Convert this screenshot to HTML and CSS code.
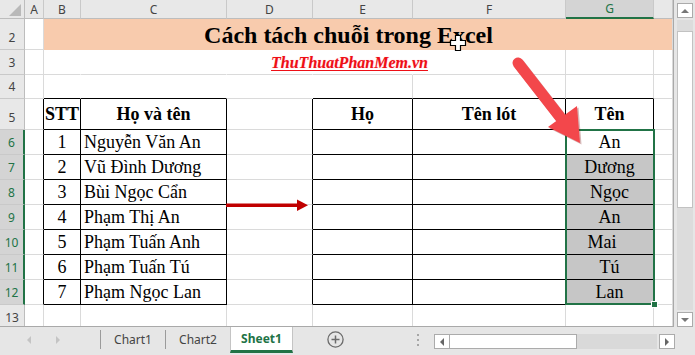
FILE: index.html
```html
<!DOCTYPE html>
<html lang="vi">
<head>
    <meta charset="UTF-8">
    <title>Cách tách chuỗi trong Excel</title>
    <link rel="stylesheet" href="styles.css">
</head>
<body>
<div class="excel">
    <div class="main">
        <div class="sheet">
            <div class="grid tracks">
                <!-- header row -->
                <div class="corner"><i class="tri"></i></div>
                <div class="ch">A</div>
                <div class="ch">B</div>
                <div class="ch">C</div>
                <div class="ch">D</div>
                <div class="ch">E</div>
                <div class="ch">F</div>
                <div class="ch on">G</div>
                <div class="ch"></div>

                <!-- row 2 -->
                <div class="rh">2</div>
                <div class="c"></div>
                <div class="c title">Cách tách chuỗi trong Excel</div>
                <div class="c peach"></div>

                <!-- row 3 -->
                <div class="rh">3</div>
                <div class="c"></div>
                <div class="c nr"></div>
                <div class="c nr"></div>
                <div class="c nr"></div>
                <div class="c nr"></div>
                <div class="c"></div>
                <div class="c"></div>
                <div class="c"></div>

                <!-- row 4 -->
                <div class="rh">4</div>
                <div class="c"></div>
                <div class="c nr kb"></div>
                <div class="c nr kb"></div>
                <div class="c nr"></div>
                <div class="c kb"></div>
                <div class="c kb"></div>
                <div class="c kb"></div>
                <div class="c"></div>

                <!-- row 5 -->
                <div class="rh">5</div>
                <div class="c kr"></div>
                <div class="t hd ctr">STT</div>
                <div class="t hd ctr">Họ và tên</div>
                <div class="c kr"></div>
                <div class="t hd ctr">Họ</div>
                <div class="t hd ctr">Tên lót</div>
                <div class="t hd ctr">Tên</div>
                <div class="c"></div>

                <!-- rows 6 - 12 -->
                <div class="rh on">6</div>
                <div class="c kr"></div>
                <div class="t ctr">1</div>
                <div class="t">Nguyễn Văn An</div>
                <div class="c kr"></div>
                <div class="t"></div>
                <div class="t"></div>
                <div class="t ctr">An</div>
                <div class="c"></div>

                <div class="rh on">7</div>
                <div class="c kr"></div>
                <div class="t ctr">2</div>
                <div class="t">Vũ Đình Dương</div>
                <div class="c kr"></div>
                <div class="t"></div>
                <div class="t"></div>
                <div class="t ctr grey">Dương</div>
                <div class="c"></div>

                <div class="rh on">8</div>
                <div class="c kr"></div>
                <div class="t ctr">3</div>
                <div class="t">Bùi Ngọc Cẩn</div>
                <div class="c kr"></div>
                <div class="t"></div>
                <div class="t"></div>
                <div class="t ctr grey">Ngọc</div>
                <div class="c"></div>

                <div class="rh on">9</div>
                <div class="c kr"></div>
                <div class="t ctr">4</div>
                <div class="t">Phạm Thị An</div>
                <div class="c kr"></div>
                <div class="t"></div>
                <div class="t"></div>
                <div class="t ctr grey">An</div>
                <div class="c"></div>

                <div class="rh on">10</div>
                <div class="c kr"></div>
                <div class="t ctr">5</div>
                <div class="t">Phạm Tuấn Anh</div>
                <div class="c kr"></div>
                <div class="t"></div>
                <div class="t"></div>
                <div class="t ctr grey lean">Mai</div>
                <div class="c"></div>

                <div class="rh on">11</div>
                <div class="c kr"></div>
                <div class="t ctr">6</div>
                <div class="t">Phạm Tuấn Tú</div>
                <div class="c kr"></div>
                <div class="t"></div>
                <div class="t"></div>
                <div class="t ctr grey">Tú</div>
                <div class="c"></div>

                <div class="rh on">12</div>
                <div class="c kr"></div>
                <div class="t ctr">7</div>
                <div class="t">Phạm Ngọc Lan</div>
                <div class="c kr"></div>
                <div class="t"></div>
                <div class="t"></div>
                <div class="t ctr grey">Lan</div>
                <div class="c"></div>

                <!-- row 13 -->
                <div class="rh">13</div>
                <div class="c"></div>
                <div class="c"></div>
                <div class="c"></div>
                <div class="c"></div>
                <div class="c"></div>
                <div class="c"></div>
                <div class="c"></div>
                <div class="c"></div>
            </div>

            <!-- floating things laid on the same tracks -->
            <div class="layer tracks">
                <div class="brand">ThuThuatPhanMem.vn</div>
                <div class="selbox"><i class="handle"></i></div>
            </div>

            <svg class="ink" width="673" height="327" viewBox="0 0 673 327">
                <g transform="translate(1.5 1.5)" opacity=".3">
                    <line x1="518" y1="63" x2="560" y2="117" stroke="#7a1414" stroke-width="11" stroke-linecap="round"/>
                    <polygon points="548,127 577,106 580,143" fill="#7a1414"/>
                </g>
                <line x1="518" y1="63" x2="560" y2="117" stroke="#f3474b" stroke-width="11" stroke-linecap="round"/>
                <polygon points="548,127 577,106 580,143" fill="#f3474b"/>

                <line x1="226" y1="205.3" x2="299" y2="205.3" stroke="#c00000" stroke-width="3.5"/>
                <polygon points="297,199.5 308,205.3 297,211" fill="#c00000"/>

                <path d="M455.5 35.5h5v5h5v5h-5v5h-5v-5h-5v-5h5z" fill="#fff" stroke="#000" stroke-width="1.2"/>
            </svg>
        </div>

        <div class="vscroll">
            <div class="sbtn"><i class="up"></i></div>
            <div class="vtrack"><div class="vthumb"></div></div>
            <div class="sbtn"><i class="down"></i></div>
        </div>
    </div>

    <div class="tabs">
        <div class="nav"><i class="left"></i><i class="right"></i></div>
        <span class="sep"></span>
        <div class="tab">Chart1</div>
        <span class="sep"></span>
        <div class="tab">Chart2</div>
        <div class="tab on">Sheet1</div>
        <div class="add">
            <svg width="17" height="17" viewBox="0 0 17 17">
                <circle cx="8.5" cy="8.5" r="7.6" fill="none" stroke="#6b6b6b" stroke-width="1.3"/>
                <path d="M8.5 4.5v8M4.5 8.5h8" stroke="#6b6b6b" stroke-width="1.5"/>
            </svg>
        </div>
        <div class="dots"><i></i><i></i><i></i></div>
        <div class="hscroll">
            <div class="sbtn"><i class="left dark"></i></div>
            <div class="htrack"><div class="hthumb"></div></div>
            <div class="sbtn"><i class="right dark"></i></div>
        </div>
    </div>
</div>
</body>
</html>
```

FILE: styles.css
```css
* { box-sizing: border-box; }

body {
    margin: 0;
    font-family: "Noto Sans", "Liberation Sans", sans-serif;
}

.excel {
    width: 695px;
    height: 355px;
    display: flex;
    flex-direction: column;
    background: #e6e6e6;
    overflow: hidden;
}

.main {
    display: flex;
    height: 327px;
}

.sheet {
    position: relative;
    width: 673px;
    height: 327px;
    background: #fff;
    border-bottom: 1px solid #a9a9a9;
    overflow: hidden;
}

.tracks {
    display: grid;
    grid-template-columns: 25px 19px 37px 146px 86px 100px 153px 88px 19px;
    grid-template-rows: 19px 31px 25px 24px 31px repeat(7, 25px) 25px;
}

/* headers */
.corner {
    background: #e8e8e8;
    border-right: 1px solid #bdbdbd;
    border-bottom: 1px solid #bdbdbd;
    display: flex;
    align-items: flex-end;
    justify-content: flex-end;
    padding: 0 3px 2px 0;
}
.tri {
    width: 0;
    height: 0;
    border-left: 12px solid transparent;
    border-bottom: 12px solid #b9b9b9;
}
.ch, .rh {
    background: #e8e8e8;
    color: #444;
    font-size: 12px;
    line-height: 14px;
    display: flex;
    justify-content: center;
}
.ch {
    align-items: center;
    padding-top: 1px;
    border-right: 1px solid #c9c9c9;
    border-bottom: 1px solid #bdbdbd;
}
.ch.on {
    background: #d4d4d4;
    color: #217346;
    border-bottom: 2px solid #217346;
}
.rh {
    align-items: flex-end;
    padding-bottom: 4px;
    border-right: 1px solid #bdbdbd;
    border-bottom: 1px solid #c9c9c9;
}
.rh.on {
    background: #d4d4d4;
    color: #217346;
    border-right: 2px solid #217346;
}

/* cells */
.c {
    border-right: 1px solid #dadada;
    border-bottom: 1px solid #dadada;
}
.c.nr { border-right-color: #fff; }
.c.kb { border-bottom-color: #000; }
.c.kr { border-right-color: #000; }

.title {
    grid-column: span 6;
    background: #f8cbad;
    border-color: #f8cbad;
    display: flex;
    align-items: center;
    justify-content: center;
    font-family: "Liberation Serif", "Times New Roman", serif;
    font-weight: bold;
    font-size: 24px;
    color: #000;
    padding-top: 2px;
}
.peach {
    background: #f8cbad;
    border-bottom-color: #f8cbad;
}

.t {
    border-right: 1px solid #000;
    border-bottom: 1px solid #000;
    display: flex;
    align-items: center;
    padding: 0 3px;
    font-family: "Liberation Serif", "Times New Roman", serif;
    font-size: 18px;
    line-height: 20px;
    color: #000;
    white-space: nowrap;
    overflow: hidden;
}
.t.ctr { justify-content: center; }
.t.hd { font-weight: bold; padding: 0; }
.t.grey { background: #c6c6c6; }
.t.lean { padding-right: 18px; }

/* overlay layer */
.layer {
    position: absolute;
    inset: 0;
    pointer-events: none;
}
.brand {
    grid-column: 3 / 9;
    grid-row: 3;
    display: flex;
    align-items: center;
    justify-content: center;
    padding-left: 1px;
    font-family: "Liberation Serif", "Times New Roman", serif;
    font-style: italic;
    font-weight: bold;
    font-size: 16px;
    color: #ee0f16;
    text-decoration: underline;
    text-underline-offset: 2px;
    text-shadow: 0 0 1px rgba(255, 120, 140, .6);
}
.selbox {
    grid-column: 8;
    grid-row: 6 / 13;
    margin: -1px -1px 0 -1px;
    border: 2px solid #217346;
    position: relative;
}
.handle {
    position: absolute;
    right: -5px;
    bottom: -5px;
    width: 7px;
    height: 7px;
    background: #217346;
    border: 1px solid #fff;
}

.ink {
    position: absolute;
    left: 0;
    top: 0;
    pointer-events: none;
}

/* vertical scrollbar */
.vscroll {
    width: 22px;
    border-left: 1px solid #a9a9a9;
    padding: 3px 2px 0 3px;
    display: flex;
    flex-direction: column;
}
.sbtn {
    width: 16px;
    height: 15px;
    background: #fff;
    border: 1px solid #ababab;
    display: flex;
    align-items: center;
    justify-content: center;
    flex-shrink: 0;
}
.vtrack {
    flex: 1;
    background: #dcdcdc;
    margin: 2px 0;
    padding-top: 11px;
}
.vthumb {
    height: 177px;
    background: #fff;
    border: 1px solid #c2c2c2;
}
.up, .down, .left, .right {
    width: 0;
    height: 0;
}
.up {
    border-left: 4px solid transparent;
    border-right: 4px solid transparent;
    border-bottom: 4px solid #777;
}
.down {
    border-left: 4px solid transparent;
    border-right: 4px solid transparent;
    border-top: 4px solid #777;
}
.left {
    border-top: 4px solid transparent;
    border-bottom: 4px solid transparent;
    border-right: 4px solid #c4c4c4;
}
.right {
    border-top: 4px solid transparent;
    border-bottom: 4px solid transparent;
    border-left: 4px solid #c4c4c4;
}
.left.dark { border-right-color: #666; }
.right.dark { border-left-color: #666; }

/* sheet tabs */
.tabs {
    flex: 1;
    display: flex;
    align-items: stretch;
    font-size: 12px;
    color: #444;
}
.nav {
    width: 100px;
    display: flex;
    align-items: center;
    padding: 0 0 3px 27px;
    gap: 25px;
}
.sep {
    width: 1px;
    height: 19px;
    background: #9b9b9b;
    align-self: center;
    margin-bottom: 3px;
}
.tab {
    width: 64px;
    display: flex;
    align-items: center;
    justify-content: center;
    padding-bottom: 3px;
}
.tab + .tab { width: 63px; }
.tab.on {
    background: #fff;
    color: #217346;
    font-weight: bold;
    border-left: 1px solid #c4c4c4;
    border-right: 1px solid #c4c4c4;
    border-bottom: 3px solid #217346;
    margin-bottom: 2px;
    padding-bottom: 0;
}
.add {
    margin-left: 34px;
    display: flex;
    align-items: center;
    padding-bottom: 4px;
}
.dots {
    margin-left: 73px;
    display: flex;
    flex-direction: column;
    justify-content: center;
    gap: 3px;
    padding-bottom: 3px;
}
.dots i {
    width: 2px;
    height: 2px;
    background: #a6a6a6;
}
.hscroll {
    margin-left: 15px;
    width: 241px;
    height: 15px;
    margin-top: 7px;
    display: flex;
}
.htrack {
    flex: 1;
    background: #d9d9d9;
    margin-right: 2px;
}
.hthumb {
    width: 127px;
    height: 100%;
    background: #fff;
    border: 1px solid #ababab;
    border-left: none;
}
```
